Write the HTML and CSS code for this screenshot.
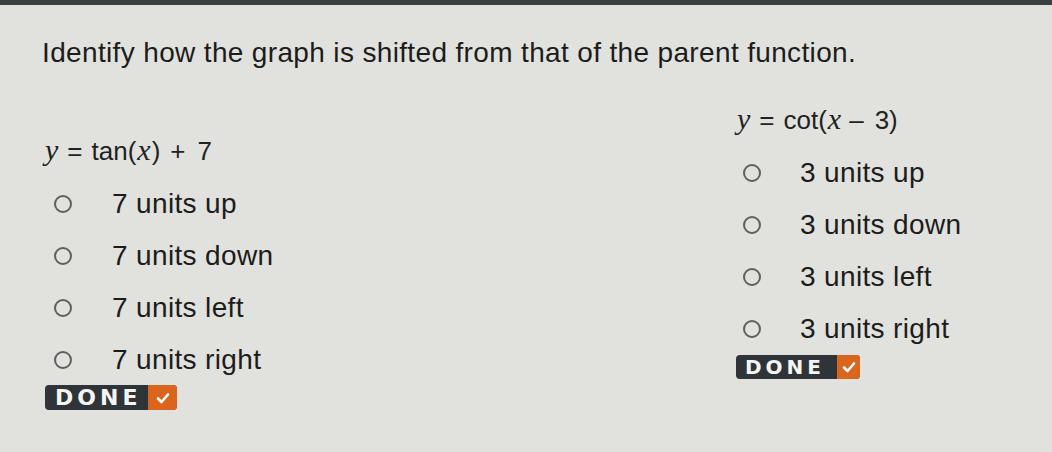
FILE: index.html
```html
<!DOCTYPE html>
<html>
<head>
<meta charset="utf-8">
<link rel="stylesheet" href="styles.css">
</head>
<body>
<div class="topbar"></div>
<div class="page">
  <h1 class="title">Identify how the graph is shifted from that of the parent function.</h1>
  <div class="cols">
    <div class="col left">
      <div class="eq"><span class="v">y</span><span class="op eqs">=</span>tan(<span class="v vx">x</span>)<span class="op plus">+</span>7</div>
      <ul class="opts">
        <li><span class="radio"></span><span class="lbl">7 units up</span></li>
        <li><span class="radio"></span><span class="lbl">7 units down</span></li>
        <li><span class="radio"></span><span class="lbl">7 units left</span></li>
        <li><span class="radio"></span><span class="lbl">7 units right</span></li>
      </ul>
      <button class="done"><span class="dtxt">DONE</span><span class="chk"><svg viewBox="0 0 16 16" width="16" height="16"><path d="M3 8.5 L6.5 12 L13 4.5" fill="none" stroke="#fff" stroke-width="2.6" stroke-linecap="round" stroke-linejoin="round"/></svg></span></button>
    </div>
    <div class="col right">
      <div class="eq"><span class="v vy">y</span><span class="op eqs">=</span>cot(<span class="v vx">x</span><span class="op minus">&ndash;</span>3)</div>
      <ul class="opts">
        <li><span class="radio"></span><span class="lbl">3 units up</span></li>
        <li><span class="radio"></span><span class="lbl">3 units down</span></li>
        <li><span class="radio"></span><span class="lbl">3 units left</span></li>
        <li><span class="radio"></span><span class="lbl">3 units right</span></li>
      </ul>
      <button class="done"><span class="dtxt">DONE</span><span class="chk"><svg viewBox="0 0 16 16" width="16" height="16"><path d="M3 8.5 L6.5 12 L13 4.5" fill="none" stroke="#fff" stroke-width="2.6" stroke-linecap="round" stroke-linejoin="round"/></svg></span></button>
    </div>
  </div>
</div>
</body>
</html>
```
FILE: styles.css
```css
html, body { margin: 0; padding: 0; }
body {
  width: 1052px; height: 452px; overflow: hidden;
  background: #e1e2de;
  font-family: "Liberation Sans", Arial, sans-serif;
  color: #222;
}
.topbar { height: 5px; background: #3c3f42; }
.page { padding: 0 0 0 42px; }
.title {
  margin: 28px 0 0 0;
  font-size: 28px; font-weight: normal; line-height: 40px;
  letter-spacing: 0.35px;
  color: #1c1c1c;
}
.cols { display: flex; }
.col { display: flex; flex-direction: column; }
.left { width: 695px; margin-top: 62px; }
.right { margin-top: 31px; }
.eq { font-size: 26px; line-height: 30px; color: #222; white-space: nowrap; }
.v { font-family: "Liberation Serif", "Times New Roman", serif; font-style: italic; font-size: 30px; margin-left: 3px; }
.vy { margin-left: 0; }
.vx { margin-left: 1px; margin-right: 1px; }
.op { display: inline-block; }
.eqs { margin: 0 9px 0 9px; }
.plus { margin: 0 12px 0 10px; }
.minus { margin: 0 11px 0 7px; }
.opts { list-style: none; margin: 12px 0 0 0; padding: 0; }
.opts li { display: flex; align-items: center; height: 52px; }
.radio {
  width: 14px; height: 14px; border: 2px solid #5f5f5f; border-radius: 50%;
  margin-left: 12px; box-sizing: content-box;
}
.right .radio { margin-left: 6px; }
.lbl { margin-left: 40px; font-size: 28px; letter-spacing: 0.35px; color: #1c1c1c; }
.right .lbl { margin-left: 39px; }
.done {
  display: flex; align-items: stretch; padding: 0; border: 0;
  border-radius: 4px; overflow: hidden;
  background: #2f3438;
  font-family: "DejaVu Sans", "Liberation Sans", sans-serif;
}
.left .done { margin: -1px 0 0 3px; width: 132px; height: 25px; }
.right .done { margin: 0 0 0 -1px; width: 124px; height: 24px; }
.dtxt {
  flex: 1; color: #f4f4f2; font-weight: bold; font-size: 22px; letter-spacing: 4px;
  line-height: 25px; text-align: left; padding-left: 10px; white-space: nowrap;
}
.right .dtxt { font-size: 20px; letter-spacing: 4px; line-height: 24px; padding-left: 9px; }
.chk {
  width: 29px; flex: none; background: #d9661c; display: flex; align-items: center; justify-content: center;
}
.right .chk { width: 23px; }
```
